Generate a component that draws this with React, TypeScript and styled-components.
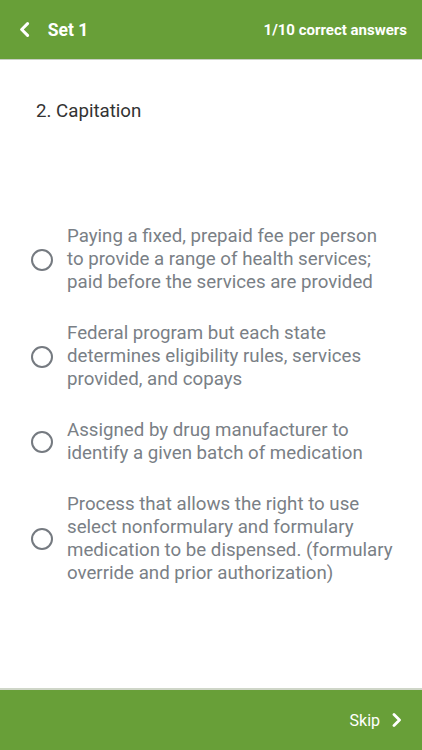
import styled, { createGlobalStyle } from "styled-components";

const GlobalStyle = createGlobalStyle`
    html, body {
        margin: 0;
        padding: 0;
        background: #ffffff;
        font-family: Roboto, "Liberation Sans", sans-serif;
    }
`;

const Screen = styled.div`
    display: flex;
    flex-direction: column;
    width: 422px;
    height: 750px;
    overflow: hidden;
`;

const TopBar = styled.header`
    display: flex;
    align-items: center;
    justify-content: space-between;
    height: 60px;
    padding: 0 15px 0 19px;
    background: #689f38;
    border-bottom: 1px solid #c9cfc4;
    color: #ffffff;
    box-sizing: border-box;
`;

const TitleGroup = styled.div`
    display: flex;
    align-items: center;
    gap: 18px;
`;

const Title = styled.span`
    font-size: 17.5px;
    font-weight: 700;
`;

const Score = styled.span`
    font-size: 15px;
    font-weight: 700;
`;

const Body = styled.main`
    flex: 1;
    display: flex;
    flex-direction: column;
    padding: 40px 25px 0 31px;
`;

const Question = styled.h2`
    margin: 0 0 0 5px;
    font-size: 18.7px;
    font-weight: 400;
    color: #333333;
    line-height: 22px;
`;

const Options = styled.div`
    display: flex;
    flex-direction: column;
    gap: 28px;
    margin-top: 103px;
`;

const Option = styled.label`
    display: flex;
    align-items: center;
    gap: 14px;
    cursor: pointer;
`;

const Radio = styled.span`
    flex: none;
    width: 18px;
    height: 18px;
    border: 2px solid #757a80;
    border-radius: 50%;
`;

const OptionText = styled.span`
    font-size: 18.7px;
    line-height: 23px;
    color: #7a7f86;
`;

const BottomBar = styled.footer`
    display: flex;
    align-items: center;
    justify-content: flex-end;
    height: 62px;
    padding: 0 20px 0 0;
    background: #689f38;
    border-top: 2px solid #cfd6c8;
    box-sizing: border-box;
`;

const SkipButton = styled.button`
    display: flex;
    align-items: center;
    gap: 12px;
    border: none;
    background: none;
    padding: 0;
    color: #ffffff;
    font: 400 16px Roboto, "Liberation Sans", sans-serif;
`;

function Chevron({ dir, size = 14 }: { dir: "left" | "right"; size?: number }) {
    const d = dir === "left" ? "M8 1.5 L2.5 7 L8 12.5" : "M2 1.5 L7.5 7 L2 12.5";
    return (
        <svg width={(size * 10) / 14} height={size} viewBox="0 0 10 14">
            <path d={d} fill="none" stroke="#ffffff" strokeWidth="2.8" strokeLinecap="round" strokeLinejoin="round" />
        </svg>
    );
}

const answers = [
    "Paying a fixed, prepaid fee per person to provide a range of health services; paid before the services are provided",
    "Federal program but each state determines eligibility rules, services provided, and copays",
    "Assigned by drug manufacturer to identify a given batch of medication",
    "Process that allows the right to use select nonformulary and formulary medication to be dispensed. (formulary override and prior authorization)",
];

export default function App() {
    return (
        <Screen>
            <GlobalStyle />
            <TopBar>
                <TitleGroup>
                    <Chevron dir="left" size={15} />
                    <Title>Set 1</Title>
                </TitleGroup>
                <Score>1/10 correct answers</Score>
            </TopBar>
            <Body>
                <Question>2. Capitation</Question>
                <Options>
                    {answers.map((a) => (
                        <Option key={a}>
                            <Radio />
                            <OptionText>{a}</OptionText>
                        </Option>
                    ))}
                </Options>
            </Body>
            <BottomBar>
                <SkipButton>
                    Skip
                    <Chevron dir="right" />
                </SkipButton>
            </BottomBar>
        </Screen>
    );
}
